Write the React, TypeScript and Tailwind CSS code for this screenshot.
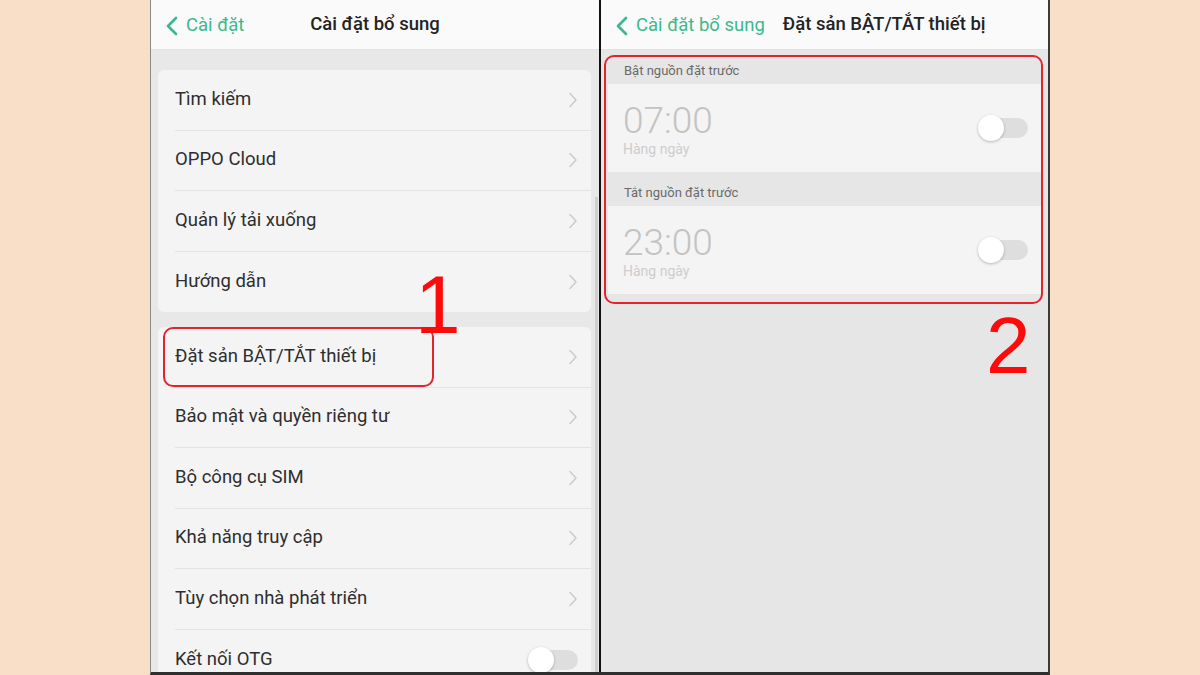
import React from "react";

const font = { fontFamily: "Roboto, 'Noto Sans', sans-serif" };

function BackChevron() {
  return (
    <svg width="14" height="20" viewBox="0 0 14 20" className="shrink-0">
      <path d="M11 2 L3 10 L11 18" fill="none" stroke="#3bb98c" strokeWidth="2.6" strokeLinecap="round" strokeLinejoin="round" />
    </svg>
  );
}

function RowChevron() {
  return (
    <svg width="10" height="16" viewBox="0 0 10 16" className="shrink-0">
      <path d="M2 1.5 L8 8 L2 14.5" fill="none" stroke="#c9c9c9" strokeWidth="1.4" strokeLinecap="round" strokeLinejoin="round" />
    </svg>
  );
}

function Toggle() {
  return (
    <div className="relative w-[50px] h-[26px] shrink-0">
      <div className="absolute left-[10px] right-0 top-[3px] h-[20px] rounded-full bg-[#dedede]" />
      <div className="absolute left-0 top-0 w-[26px] h-[26px] rounded-full bg-white shadow-[0_1px_3px_rgba(0,0,0,0.25)]" />
    </div>
  );
}

function Row({ label, last, toggle }: { label: string; last?: boolean; toggle?: boolean }) {
  return (
    <div className="h-[60.5px] pl-[17px] flex">
      <div className={`flex-1 flex items-center justify-between pr-[13px] ${last ? "" : "border-b border-[#e3e3e3]"}`}>
        <span className="text-[18.5px] text-[#2e2e2e]">{label}</span>
        {toggle ? <Toggle /> : <RowChevron />}
      </div>
    </div>
  );
}

function TimeRow({ time }: { time: string }) {
  return (
    <div className="h-[88px] bg-[#f4f4f4] flex items-center justify-between pl-[15px] pr-[13px]">
      <div className="flex flex-col pt-[3px]">
        <span className="text-[37px] font-light leading-[38px] text-[#c3c3c3]">{time}</span>
        <span className="text-[14px] leading-[18px] text-[#cdcdcd]">Hàng ngày</span>
      </div>
      <Toggle />
    </div>
  );
}

export default function App() {
  const group1 = ["Tìm kiếm", "OPPO Cloud", "Quản lý tải xuống", "Hướng dẫn"];
  const group2 = [
    "Đặt sản BẬT/TẮT thiết bị",
    "Bảo mật và quyền riêng tư",
    "Bộ công cụ SIM",
    "Khả năng truy cập",
    "Tùy chọn nhà phát triển",
  ];

  return (
    <div className="w-[1200px] h-[675px] bg-[#fadfc8] flex justify-center overflow-hidden" style={font}>
      <div className="w-[900px] h-[675px] flex border-l border-[#8a8a8a] border-r-2 border-r-[#3a3a3a] border-b-[3px] border-b-[#2f2f2f]">
        {/* Left screen */}
        <div className="relative w-[450px] shrink-0 h-full bg-[#e8e8e8] border-r-2 border-[#111] overflow-hidden">
          <div className="h-[50px] bg-[#fafafa] border-b border-[#e2e2e2] grid grid-cols-[1fr_auto_1fr] items-center">
            <div className="flex items-center gap-[7px] pl-[14px] pt-[2px]">
              <BackChevron />
              <span className="text-[18.5px] text-[#3bb98c]">Cài đặt</span>
            </div>
            <span className="text-[18.5px] font-medium text-[#232323] pt-[1px]">Cài đặt bổ sung</span>
            <div />
          </div>
          <div className="pl-[7px] pr-[8px] pt-[20px] flex flex-col gap-[15px]">
            <div className="rounded-[6px] bg-[#f4f4f4]">
              {group1.map((g, i) => (
                <Row key={g} label={g} last={i === group1.length - 1} />
              ))}
            </div>
            <div className="rounded-[6px] bg-[#f4f4f4]">
              {group2.map((g) => (
                <Row key={g} label={g} />
              ))}
              <Row label="Kết nối OTG" toggle last />
            </div>
          </div>
          {/* scrollbar */}
          <div className="absolute left-[444px] top-[197px] w-[3px] h-[480px] bg-[#cfcfcf]" />
          {/* annotation */}
          <div className="absolute left-[12px] top-[327px] w-[271px] h-[60px] rounded-[10px] border-2 border-[#e3242f]" />
          <div className="absolute left-[264px] top-[255px] text-[82px] leading-[100px] text-[#ff0a0a]" style={{ fontFamily: "'Liberation Sans', Arial, sans-serif" }}>
            1
          </div>
        </div>

        {/* Right screen */}
        <div className="relative flex-1 h-full bg-[#e6e6e6] overflow-hidden">
          <div className="h-[50px] bg-[#fafafa] border-b border-[#e2e2e2] flex items-center pl-[14px] gap-[18px]">
            <div className="flex items-center gap-[7px] pt-[2px]">
              <BackChevron />
              <span className="text-[18.5px] text-[#3bb98c]">Cài đặt bổ sung</span>
            </div>
            <span className="text-[18.5px] font-medium text-[#232323] pt-[1px]">Đặt sản BẬT/TẮT thiết bị</span>
          </div>
          <div className="px-[7px]">
            <div className="h-[34px] flex items-end pb-[4px] pl-[16px] text-[13px] text-[#6a6a6a]">Bật nguồn đặt trước</div>
            <TimeRow time="07:00" />
            <div className="h-[34px] flex items-end pb-[4px] pl-[16px] text-[13px] text-[#6a6a6a]">Tắt nguồn đặt trước</div>
            <TimeRow time="23:00" />
          </div>
          {/* annotation */}
          <div className="absolute left-[3px] top-[55px] w-[439px] h-[249px] rounded-[10px] border-2 border-[#e3242f]" />
          <div className="absolute left-[385px] top-[298px] text-[80px] leading-[96px] text-[#ff0a0a]" style={{ fontFamily: "'Liberation Sans', Arial, sans-serif" }}>
            2
          </div>
        </div>
      </div>
    </div>
  );
}
